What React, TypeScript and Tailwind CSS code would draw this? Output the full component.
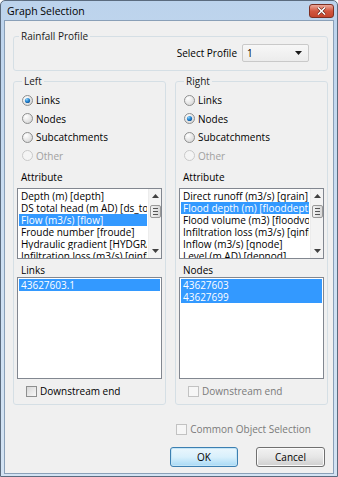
import React from 'react';

const FONT = { fontFamily: '"Open Sans", "Noto Sans", sans-serif' };

const GroupBox: React.FC<{ title: string; className?: string; children: React.ReactNode }> = ({ title, className = '', children }) => (
  <fieldset className={`border border-[#d5dfe5] rounded-[3px] min-w-0 ${className}`}>
    <legend className="ml-[5px] px-[2px] leading-[12px] text-[#1a1a1a]">{title}</legend>
    {children}
  </fieldset>
);

const Radio: React.FC<{ label: string; checked?: boolean; disabled?: boolean }> = ({ label, checked, disabled }) => (
  <div className="h-[18.5px] flex items-center pl-[5px]">
    <svg width="11" height="11" viewBox="0 0 11 11" className="shrink-0">
      <defs>
        <radialGradient id="rfill" cx="0.35" cy="0.3" r="0.8">
          <stop offset="0" stopColor="#ffffff" />
          <stop offset="1" stopColor="#d4d4d4" />
        </radialGradient>
        <radialGradient id="rdot" cx="0.35" cy="0.3" r="0.8">
          <stop offset="0" stopColor="#8fd0f5" />
          <stop offset="0.5" stopColor="#2a8ad4" />
          <stop offset="1" stopColor="#0d4d8f" />
        </radialGradient>
      </defs>
      <circle cx="5.5" cy="5.5" r="5" fill={disabled ? '#f4f4f4' : 'url(#rfill)'} stroke={disabled ? '#c8c8c8' : '#8e8f8f'} strokeWidth="1" />
      {checked && <circle cx="5.5" cy="5.5" r="2.6" fill="url(#rdot)" />}
    </svg>
    <span className={`ml-[3px] leading-[12px] ${disabled ? 'text-[#a0a0a0]' : 'text-black'}`}>{label}</span>
  </div>
);

const Check: React.FC<{ label: string; disabled?: boolean; className?: string }> = ({ label, disabled, className = '' }) => (
  <div className={`flex items-center h-[12px] ${className}`}>
    <span
      className={`w-[11px] h-[11px] border shrink-0 ${
        disabled ? 'border-[#c2c2c2] bg-[#f6f6f6]' : 'border-[#8e8f8f] bg-gradient-to-br from-[#d8d8d8] to-[#f8f8f8]'
      }`}
    />
    <span className={`ml-[3px] leading-[12px] ${disabled ? 'text-[#7a7a7a]' : 'text-black'}`}>{label}</span>
  </div>
);

const ScrollBar: React.FC = () => (
  <div className="w-[13px] shrink-0 bg-[#f3f3f3] border-l border-[#ececec] flex flex-col items-center">
    <div className="h-[14px] flex items-center justify-center">
      <svg width="7" height="4" viewBox="0 0 7 4"><path d="M0 4 L3.5 0 L7 4 Z" fill="#404040" /></svg>
    </div>
    <div className="mt-[2px] w-[11px] h-[13px] rounded-[2px] border border-[#999] bg-gradient-to-r from-[#f2f2f2] to-[#d8d8d8] flex flex-col items-center justify-center gap-[2px]">
      <span className="w-[5px] h-px bg-[#555]" />
      <span className="w-[5px] h-px bg-[#555]" />
      <span className="w-[5px] h-px bg-[#555]" />
    </div>
    <div className="flex-1" />
    <div className="h-[14px] flex items-center justify-center">
      <svg width="7" height="4" viewBox="0 0 7 4"><path d="M0 0 L3.5 4 L7 0 Z" fill="#404040" /></svg>
    </div>
  </div>
);

const ListBox: React.FC<{ items: string[]; selected: number[]; height: string; scroll?: boolean }> = ({ items, selected, height, scroll }) => (
  <div className={`${height} border border-[#828790] bg-white flex overflow-hidden`}>
    <div className="flex-1 min-w-0 p-[1px] overflow-hidden">
      {items.map((it, i) => (
        <div
          key={it}
          className={`h-[12px] leading-[12px] px-[2px] whitespace-nowrap overflow-hidden ${
            selected.includes(i) ? 'bg-[#3399ff] text-white' : 'text-black'
          }`}
        >
          {it}
        </div>
      ))}
    </div>
    {scroll && <ScrollBar />}
  </div>
);

const Side: React.FC<{
  title: string;
  checked: number;
  attrs: string[];
  attrSel: number;
  listTitle: string;
  ids: string[];
  downstreamDisabled?: boolean;
}> = ({ title, checked, attrs, attrSel, listTitle, ids, downstreamDisabled }) => (
  <GroupBox title={title} className="px-[3px] pb-[7px]">
    <div className="pt-[4px]">
      {['Links', 'Nodes', 'Subcatchments'].map((l, i) => (
        <Radio key={l} label={l} checked={checked === i} />
      ))}
      <Radio label="Other" disabled />
    </div>
    <div className="mt-[6px] ml-[4px] leading-[12px] text-black">Attribute</div>
    <div className="mt-[5px]">
      <ListBox items={attrs} selected={[attrSel]} height="h-[71px]" scroll />
    </div>
    <div className="mt-[5px] ml-[4px] leading-[12px] text-black">{listTitle}</div>
    <div className="mt-[1px]">
      <ListBox items={ids} selected={ids.map((_, i) => i)} height="h-[102px]" />
    </div>
    <Check label="Downstream end" disabled={downstreamDisabled} className="mt-[6px] ml-[9px]" />
  </GroupBox>
);

export default function App() {
  return (
    <div className="w-[338px] h-[477px] text-[10px] select-none" style={FONT}>
      <div className="w-full h-full flex flex-col border border-[#5b6b7e] rounded-t-[5px] bg-gradient-to-b from-[#bcd3ec] via-[#cddff2] to-[#d3e3f3] overflow-hidden">
        {/* title bar */}
        <div className="h-[19px] shrink-0 flex items-center pl-[6px] pr-[3px]">
          <span className="text-[10.5px] text-black leading-[12px]">Graph Selection</span>
          <div className="ml-auto w-[25px] h-[14px] rounded-[3px] border border-[#7d2f22] bg-gradient-to-b from-[#e9a99c] via-[#d2563f] to-[#c4442c] flex items-center justify-center">
            <svg width="9" height="8" viewBox="0 0 9 8">
              <path d="M1 0.5 L8 7.5 M8 0.5 L1 7.5" stroke="#5a1b10" strokeWidth="2.6" />
              <path d="M1 0.5 L8 7.5 M8 0.5 L1 7.5" stroke="#ffffff" strokeWidth="1.6" />
            </svg>
          </div>
        </div>
        {/* client area */}
        <div className="flex-1 mx-[3px] mb-[2px] border border-[#8aa0b8] bg-[#f0f0f0] pt-[9px] pl-[8px] pr-[5px] flex flex-col">
          <GroupBox title="Rainfall Profile" className="pb-[8px]">
            <div className="mt-[2px] flex items-center justify-end pr-[18px]">
              <span className="text-black leading-[12px] mr-[5px]">Select Profile</span>
              <div className="w-[67px] h-[18px] border border-[#c9c9c9] rounded-[2px] bg-gradient-to-b from-[#f7f7f7] to-[#ececec] flex items-center pl-[4px] pr-[6px]">
                <span className="text-black leading-[12px]">1</span>
                <svg width="7" height="4" viewBox="0 0 7 4" className="ml-auto">
                  <path d="M0 0 L7 0 L3.5 4 Z" fill="#1a1a1a" />
                </svg>
              </div>
            </div>
          </GroupBox>

          <div className="mt-[4px] grid grid-cols-2 gap-[9px]">
            <Side
              title="Left"
              checked={0}
              attrs={[
                'Depth (m) [depth]',
                'DS total head (m AD) [ds_totalhead]',
                'Flow (m3/s) [flow]',
                'Froude number [froude]',
                'Hydraulic gradient [HYDGRAD]',
                'Infiltration loss (m3/s) [qinfln]',
              ]}
              attrSel={2}
              listTitle="Links"
              ids={['43627603.1']}
            />
            <Side
              title="Right"
              checked={1}
              attrs={[
                'Direct runoff (m3/s) [qrain]',
                'Flood depth (m) [flooddepth]',
                'Flood volume (m3) [floodvolume]',
                'Infiltration loss (m3/s) [qinfnode]',
                'Inflow (m3/s) [qnode]',
                'Level (m AD) [depnod]',
              ]}
              attrSel={1}
              listTitle="Nodes"
              ids={['43627603', '43627699']}
              downstreamDisabled
            />
          </div>

          <div className="mt-[18px] flex justify-end pr-[17px]">
            <Check label="Common Object Selection" disabled />
          </div>

          <div className="mt-[12px] flex justify-end gap-[18px] pr-[3px]">
            <button className="w-[68px] h-[20px] rounded-[3px] border border-[#3c7fb1] bg-gradient-to-b from-[#eaf6fd] via-[#d9f0fc] to-[#a7d9f5] text-black leading-[12px] shadow-[inset_0_0_0_1px_#c4e5f6]">
              OK
            </button>
            <button className="w-[69px] h-[20px] rounded-[3px] border border-[#707070] bg-gradient-to-b from-[#f2f2f2] via-[#e6e6e6] to-[#cfcfcf] text-black leading-[12px] shadow-[inset_0_0_0_1px_#fbfbfb]">
              Cancel
            </button>
          </div>
        </div>
      </div>
    </div>
  );
}
